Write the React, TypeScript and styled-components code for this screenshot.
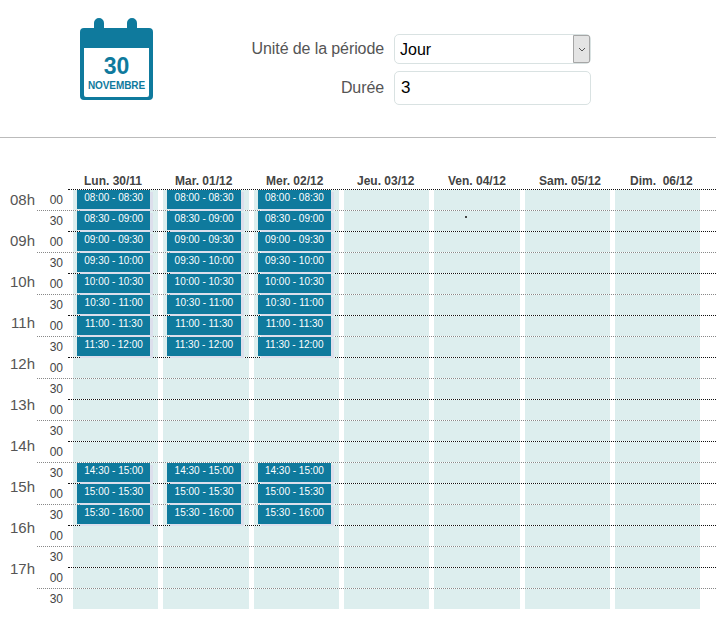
import styled, { createGlobalStyle } from "styled-components";

const GlobalStyle = createGlobalStyle`
  html, body {
    margin: 0;
    padding: 0;
    background: #fff;
    font-family: "Liberation Sans", Arial, sans-serif;
  }
`;

const Page = styled.div`
  width: 716px;
  height: 643px;
  overflow: hidden;
`;

const Header = styled.header`
  box-sizing: border-box;
  height: 138px;
  border-bottom: 1px solid #bbb;
  padding: 18px 0 0 80px;
  display: flex;
  align-items: flex-start;
`;

const CalendarBox = styled.div`
  position: relative;
  width: 73px;
  height: 82px;
  flex: none;
`;

const CalendarText = styled.div`
  position: absolute;
  left: 0;
  right: 0;
  top: 36px;
  display: flex;
  flex-direction: column;
  align-items: center;
  color: #0f7a9d;
  font-weight: 700;
`;

const CalendarDay = styled.span`
  font-size: 23px;
  line-height: 25px;
`;

const CalendarMonth = styled.span`
  font-size: 10px;
  line-height: 12px;
  margin-top: 1px;
  letter-spacing: -0.1px;
`;

const Form = styled.form`
  margin: 16px 0 0 89px;
  display: grid;
  grid-template-columns: 142px 197px;
  column-gap: 10px;
  row-gap: 7px;
  align-items: center;
`;

const Label = styled.label`
  font-size: 16px;
  letter-spacing: -0.1px;
  color: #555;
  text-align: right;
  white-space: nowrap;
`;

const SelectWrap = styled.div`
  position: relative;
  height: 30px;
`;

const Select = styled.select`
  box-sizing: border-box;
  width: 100%;
  height: 100%;
  appearance: none;
  border: 1px solid #d9e2e2;
  border-radius: 5px;
  background: #fff;
  color: #000;
  font: 16px "Liberation Sans", Arial, sans-serif;
  padding: 0 5px;
  outline: none;
`;

const SelectArrow = styled.span`
  position: absolute;
  top: 1px;
  right: 1px;
  bottom: 1px;
  width: 17px;
  box-sizing: border-box;
  display: flex;
  align-items: center;
  justify-content: center;
  background: #e4e4e4;
  border: 1px solid #a6a6a6;
  border-radius: 0 2px 2px 0;
  pointer-events: none;
`;

const TextInput = styled.input`
  box-sizing: border-box;
  width: 100%;
  height: 34px;
  border: 1px solid #d9e2e2;
  border-radius: 5px;
  color: #000;
  font: 17px "Liberation Sans", Arial, sans-serif;
  padding: 0 6px;
  outline: none;
`;

const Planning = styled.section`
  padding-top: 35px;
`;

const DaysRow = styled.div`
  margin-left: 84px;
  height: 16px;
  display: grid;
  grid-template-columns: repeat(7, 91px);
`;

const DayName = styled.div`
  font-size: 12px;
  line-height: 16px;
  font-weight: 700;
  color: #444;
  white-space: pre;
`;

const Board = styled.div`
  display: flex;
`;

const HourColumn = styled.div`
  width: 37px;
  flex: none;
`;

const HourLabel = styled.div`
  height: 41px;
  padding-right: 2px;
  font-size: 15px;
  line-height: 21px;
  color: #555;
  text-align: right;
`;

const Rows = styled.div`
  flex: 1;
`;

const Row = styled.div<{ $half: boolean }>`
  height: 21px;
  box-sizing: border-box;
  display: flex;
  border-top: 1px dotted ${({ $half }) => ($half ? "#888" : "#111")};
  margin-left: ${({ $half }) => ($half ? "0" : "31px")};
`;

const MinuteLabel = styled.div<{ $half: boolean }>`
  width: 26px;
  flex: none;
  margin-left: ${({ $half }) => ($half ? "0" : "-31px")};
  margin-right: 5px;
  font-size: 12px;
  line-height: 20px;
  color: #444;
  text-align: right;
`;

const Slots = styled.div`
  width: 627.5px;
  margin-left: 5px;
  display: grid;
  grid-template-columns: repeat(7, 1fr);
  column-gap: 4.9px;
`;

const Slot = styled.div`
  position: relative;
  background: #ddeeee;
  padding: 0 8px 1px 4px;
`;

const Event = styled.div`
  height: 19px;
  background: #0f7a9d;
  color: #fff;
  font-size: 10px;
  line-height: 16px;
  text-align: center;
  box-shadow: 3px 2px 0 #dcdfec;
  white-space: nowrap;
`;

const Speck = styled.span`
  position: absolute;
  left: 31px;
  top: 5px;
  width: 2px;
  height: 2px;
  background: #444;
`;

const days = [
  "Lun. 30/11",
  "Mar. 01/12",
  "Mer. 02/12",
  "Jeu. 03/12",
  "Ven. 04/12",
  "Sam. 05/12",
  "Dim.  06/12",
];

const hours = ["08h", "09h", "10h", "11h", "12h", "13h", "14h", "15h", "16h", "17h"];

const pad = (n: number) => String(n).padStart(2, "0");
const slotTime = (i: number) =>
  `${pad(8 + Math.floor(i / 2))}:${i % 2 ? "30" : "00"}`;

// Créneaux réservés, seulement sur les trois premiers jours
const booked = [0, 1, 2, 3, 4, 5, 6, 7, 13, 14, 15];

function CalendarIcon() {
  return (
    <CalendarBox>
      <svg width="73" height="82" viewBox="0 0 73 82">
        <path
          fill="#0f7a9d"
          d="M14 10V5a5 5 0 0 1 10 0v5h23V5a5 5 0 0 1 10 0v5h12a4 4 0 0 1 4 4v64a4 4 0 0 1-4 4H4a4 4 0 0 1-4-4V14a4 4 0 0 1 4-4z"
        />
        <path fill="#fff" d="M4 30h65v47a2 2 0 0 1-2 2H6a2 2 0 0 1-2-2z" />
      </svg>
      <CalendarText>
        <CalendarDay>30</CalendarDay>
        <CalendarMonth>NOVEMBRE</CalendarMonth>
      </CalendarText>
    </CalendarBox>
  );
}

export default function App() {
  return (
    <Page>
      <GlobalStyle />
      <Header>
        <CalendarIcon />
        <Form>
          <Label>Unité de la période</Label>
          <SelectWrap>
            <Select defaultValue="Jour">
              <option>Jour</option>
              <option>Semaine</option>
            </Select>
            <SelectArrow>
              <svg width="8" height="5" viewBox="0 0 8 5">
                <path d="M1 1l3 3 3-3" fill="none" stroke="#555" strokeWidth="1" />
              </svg>
            </SelectArrow>
          </SelectWrap>
          <Label>Durée</Label>
          <TextInput defaultValue="3" />
        </Form>
      </Header>
      <Planning>
        <DaysRow>
          {days.map((d) => (
            <DayName key={d}>{d}</DayName>
          ))}
        </DaysRow>
        <Board>
          <HourColumn>
            {hours.map((h) => (
              <HourLabel key={h}>{h}</HourLabel>
            ))}
          </HourColumn>
          <Rows>
            {Array.from({ length: 20 }, (_, i) => {
              const half = i % 2 === 1;
              return (
                <Row key={i} $half={half}>
                  <MinuteLabel $half={half}>{half ? "30" : "00"}</MinuteLabel>
                  <Slots>
                    {days.map((d, col) => (
                      <Slot key={d}>
                        {col < 3 && booked.includes(i) && (
                          <Event>
                            {slotTime(i)} - {slotTime(i + 1)}
                          </Event>
                        )}
                        {col === 4 && i === 1 && <Speck />}
                      </Slot>
                    ))}
                  </Slots>
                </Row>
              );
            })}
          </Rows>
        </Board>
      </Planning>
    </Page>
  );
}
